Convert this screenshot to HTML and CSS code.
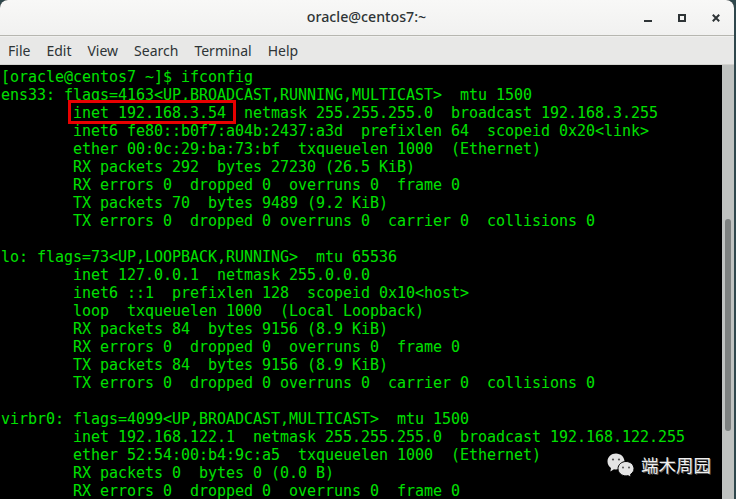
FILE: index.html
```html
<!DOCTYPE html>
<html lang="en">
<head>
<meta charset="utf-8">
<title>oracle@centos7:~</title>
<link rel="stylesheet" href="styles.css">
</head>
<body>
<div class="window">
  <header class="titlebar">
    <span class="title">oracle@centos7:~</span>
    <div class="controls">
      <svg class="ctl" width="16" height="16" viewBox="0 0 16 16"><rect x="0" y="11" width="8" height="2" fill="#2e3436"/></svg>
      <svg class="ctl" width="16" height="16" viewBox="0 0 16 16"><rect x="1" y="6" width="6" height="6" fill="none" stroke="#2e3436" stroke-width="2"/></svg>
      <svg class="ctl" width="16" height="16" viewBox="0 0 16 16"><path d="M.8 5.800l6.400 6.400M7.200 5.800l-6.400 6.400" fill="none" stroke="#2e3436" stroke-width="2"/></svg>
    </div>
  </header>
  <nav class="menubar">
    <span>File</span><span>Edit</span><span>View</span><span>Search</span><span>Terminal</span><span>Help</span>
  </nav>
  <main class="body">
    <pre class="term">[oracle@centos7 ~]$ ifconfig
ens33: flags=4163&lt;UP,BROADCAST,RUNNING,MULTICAST&gt;  mtu 1500
        inet 192.168.3.54  netmask 255.255.255.0  broadcast 192.168.3.255
        inet6 fe80::b0f7:a04b:2437:a3d  prefixlen 64  scopeid 0x20&lt;link&gt;
        ether 00:0c:29:ba:73:bf  txqueuelen 1000  (Ethernet)
        RX packets 292  bytes 27230 (26.5 KiB)
        RX errors 0  dropped 0  overruns 0  frame 0
        TX packets 70  bytes 9489 (9.2 KiB)
        TX errors 0  dropped 0 overruns 0  carrier 0  collisions 0

lo: flags=73&lt;UP,LOOPBACK,RUNNING&gt;  mtu 65536
        inet 127.0.0.1  netmask 255.0.0.0
        inet6 ::1  prefixlen 128  scopeid 0x10&lt;host&gt;
        loop  txqueuelen 1000  (Local Loopback)
        RX packets 84  bytes 9156 (8.9 KiB)
        RX errors 0  dropped 0  overruns 0  frame 0
        TX packets 84  bytes 9156 (8.9 KiB)
        TX errors 0  dropped 0 overruns 0  carrier 0  collisions 0

virbr0: flags=4099&lt;UP,BROADCAST,MULTICAST&gt;  mtu 1500
        inet 192.168.122.1  netmask 255.255.255.0  broadcast 192.168.122.255
        ether 52:54:00:b4:9c:a5  txqueuelen 1000  (Ethernet)
        RX packets 0  bytes 0 (0.0 B)
        RX errors 0  dropped 0  overruns 0  frame 0</pre>
    <div class="highlight"></div>
    <div class="scrollbar"><div class="thumb"></div></div>
    <div class="watermark">
      <svg class="wechat" width="27" height="24" viewBox="0 0 27 24">
        <path d="M9 .5C4.300.5.500 4 .5 8.500c0 2.800 1.400 5 3.500 6.500l-.6 3.500 3.600-2.300c.6.100 1.300.2 2 .2 4.700 0 8.500-3.500 8.500-7.900S13.700.5 9 .5z" fill="#e4e4e4"/>
        <path d="M19 8.500c-4.400 0-8 3.200-8 7.200s3.600 7.200 8 7.200c.7 0 1.300-.1 2-.2l3 1.300-.4-2.700c2-1.300 3.400-3.300 3.400-5.600 0-4-3.600-7.200-8-7.200z" fill="#e4e4e4" stroke="#000" stroke-width="1"/>
        <circle cx="6" cy="6.500" r="1.100" fill="#555"/><circle cx="12" cy="6.500" r="1.100" fill="#555"/>
        <circle cx="16" cy="14.500" r="1" fill="#555"/><circle cx="22" cy="14.500" r="1" fill="#555"/>
      </svg>
      <span class="wm-text">端木周园</span>
    </div>
  </main>
</div>
</body>
</html>
```
FILE: styles.css
```css
html, body { margin: 0; padding: 0; background: #2f474c; }
body { width: 736px; height: 499px; overflow: hidden; }
.window { width: 734px; height: 499px; display: flex; flex-direction: column; overflow: hidden; background: #000; border-radius: 8px 8px 0 0; }
.titlebar { height: 36px; flex: none; position: relative; display: flex; align-items: center; justify-content: center; background: linear-gradient(#f8f8f7, #f1f1f0); border-bottom: 1px solid #b6b6b0; box-sizing: border-box; padding-right: 1px; }
.title { font: 500 14.2px/1 "Noto Sans", sans-serif; color: #2e3436; }
.controls { position: absolute; right: 6px; top: 9px; display: flex; gap: 18px; }
.ctl { display: block; }
.menubar { height: 29px; flex: none; box-sizing: border-box; display: flex; align-items: center; padding: 0 8px; gap: 16px; background: #e8e8e7; border-top: 1px solid #f0f0ee; border-bottom: 1px solid #d3d3d0; font: 14px/1 "Noto Sans", sans-serif; color: #2e3436; }
.body { flex: 1; position: relative; display: flex; min-height: 0; overflow: hidden; }
.term { flex: 1; margin: 0; padding: 3px 0 0 1px; font: 15px/18px "DejaVu Sans Mono", monospace; letter-spacing: -0.03px; color: #00e000; background: #000; overflow: hidden; }
.highlight { position: absolute; left: 68px; top: 35px; width: 168px; height: 24px; border: 3px solid #e80000; box-sizing: border-box; }
.scrollbar { width: 12px; flex: none; background: #bfc2c0; display: flex; justify-content: center; }
.thumb { width: 6px; height: 212px; margin-top: 154px; background: #7d8180; border-radius: 3px; }
.watermark { position: absolute; right: 23px; bottom: 22px; display: flex; align-items: center; gap: 7px; }
.wechat { display: block; }
.wm-text { font: 17.5px/1 "Noto Sans CJK SC", sans-serif; color: #f0f0f0; white-space: nowrap; text-shadow: 1px 1px 0 #555; }
```
